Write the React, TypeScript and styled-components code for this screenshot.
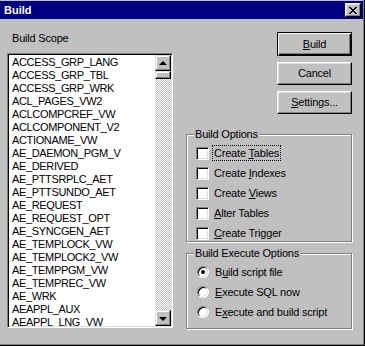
import styled, { createGlobalStyle } from "styled-components"

const GlobalStyles = createGlobalStyle`
  *,
  *::before,
  *::after {
    box-sizing: border-box;
    margin: 0;
    padding: 0;
  }

  body {
    margin: 0;
    font-family: "Liberation Sans", Arial, sans-serif;
    font-size: 11px;
    color: #000;
    background: #c0c0c0;
  }
`

const StyledWindow = styled.div`
  width: 365px;
  height: 346px;
  padding-top: 1px;
  background: #c0c0c0;
  box-shadow: inset -1px -1px #000, inset -2px -2px #808080;
  overflow: hidden;
`

const StyledTitleBar = styled.div`
  height: 18px;
  margin-right: 2px;
  padding: 0 2px 0 4px;
  display: flex;
  align-items: center;
  justify-content: space-between;
  background: #000080;
`

const StyledTitle = styled.span`
  color: #fff;
  font-weight: 700;
  font-size: 11px;
  line-height: 18px;
`

const StyledCloseButton = styled.div`
  width: 16px;
  height: 14px;
  display: flex;
  align-items: center;
  justify-content: center;
  padding-top: 1px;
  background: #c0c0c0;
  border: 1px solid;
  border-color: #fff #000 #000 #fff;
  box-shadow: inset -1px -1px #808080, inset 1px 1px #dfdfdf;
`

const StyledBody = styled.div`
  display: flex;
  gap: 13px;
  padding: 13px 0 0 7px;
`

const StyledLeftColumn = styled.div`
  width: 166px;
  display: flex;
  flex-direction: column;
`

const StyledLabel = styled.div`
  margin: 0 0 8px 5px;
  line-height: 13px;
  letter-spacing: -0.2px;
`

const StyledListBox = styled.div`
  height: 275px;
  display: flex;
  border: 1px solid;
  border-color: #808080 #fff #fff #808080;
  box-shadow: inset 1px 1px #000, inset -1px -1px #dfdfdf;
  padding: 1px;
`

const StyledItems = styled.div`
  flex: 1;
  overflow: hidden;
  padding: 1px 0 0 3px;
  background: #fff;
`

const StyledItem = styled.div`
  height: 13px;
  line-height: 13px;
  white-space: nowrap;
  letter-spacing: -0.35px;
`

const StyledScrollBar = styled.div`
  width: 16px;
  display: flex;
  flex-direction: column;
`

const StyledTrack = styled.div`
  flex: 1;
  background-color: #fff;
  background-image: repeating-conic-gradient(#c0c0c0 0 25%, #fff 0 50%);
  background-size: 2px 2px;
`

const StyledRaised = styled.div<{ $height: number }>`
  height: ${(p) => p.$height}px;
  display: flex;
  align-items: center;
  justify-content: center;
  background: #c0c0c0;
  border: 1px solid;
  border-color: #dfdfdf #000 #000 #dfdfdf;
  box-shadow: inset -1px -1px #808080, inset 1px 1px #fff;
`

const StyledArrow = styled.span<{ $down?: boolean }>`
  width: 0;
  height: 0;
  border-left: 4px solid transparent;
  border-right: 4px solid transparent;
  ${(p) =>
    p.$down
      ? "border-top: 4px solid #000; margin-top: 1px;"
      : "border-bottom: 4px solid #000; margin-top: -1px;"}
`

const StyledRightColumn = styled.div`
  width: 166px;
  display: flex;
  flex-direction: column;
`

const StyledButtonStack = styled.div`
  align-self: flex-end;
  width: 75px;
  display: flex;
  flex-direction: column;
  gap: 6px;
`

const StyledButton = styled.div<{ $isDefault?: boolean }>`
  height: ${(p) => (p.$isDefault ? 24 : 23)}px;
  display: flex;
  align-items: center;
  justify-content: center;
  background: #c0c0c0;
  border: 1px solid;
  border-color: ${(p) => (p.$isDefault ? "#000" : "#fff #000 #000 #fff")};
  box-shadow: ${(p) =>
    p.$isDefault
      ? "inset 1px 1px #fff, inset -1px -1px #000, inset -2px -2px #808080"
      : "inset -1px -1px #808080, inset 1px 1px #dfdfdf"};
  line-height: 13px;
  letter-spacing: -0.2px;
`

const StyledGroup = styled.fieldset<{ $top: number; $bottom: number }>`
  margin-top: ${(p) => p.$top}px;
  padding: 4px 0 ${(p) => p.$bottom}px 0;
  border: 1px solid #808080;
  box-shadow: inset 1px 1px #fff, 1px 1px #fff;
  min-width: 0;
`

const StyledLegend = styled.legend`
  margin-left: 7px;
  padding: 0 1px;
  line-height: 13px;
  letter-spacing: -0.2px;
  background: #c0c0c0;
`

const StyledOptions = styled.div`
  display: flex;
  flex-direction: column;
  gap: 4px;
  padding-left: 9px;
`

const StyledOption = styled.div`
  height: 16px;
  display: flex;
  align-items: center;
  gap: 3px;
`

const StyledCheckbox = styled.span`
  width: 13px;
  height: 13px;
  background: #fff;
  border: 1px solid;
  border-color: #808080 #fff #fff #808080;
  box-shadow: inset 1px 1px #000, inset -1px -1px #dfdfdf;
`

const StyledRadio = styled.span<{ $checked?: boolean }>`
  width: 12px;
  height: 12px;
  margin-left: 1px;
  margin-right: 1px;
  border-radius: 50%;
  background: #fff;
  border: 1px solid;
  border-color: #808080 #fff #fff #808080;
  box-shadow: inset 1px 1px #000, inset -1px -1px #dfdfdf;
  display: flex;
  align-items: center;
  justify-content: center;

  &::after {
    content: "";
    width: 4px;
    height: 4px;
    border-radius: 50%;
    background: ${(p) => (p.$checked ? "#000" : "transparent")};
  }
`

const StyledOptionText = styled.span<{ $focused?: boolean }>`
  height: 16px;
  padding: 0 1px;
  line-height: 14px;
  letter-spacing: -0.2px;
  border: 1px ${(p) => (p.$focused ? "dotted #000" : "solid transparent")};
`

const items = [
  "ACCESS_GRP_LANG",
  "ACCESS_GRP_TBL",
  "ACCESS_GRP_WRK",
  "ACL_PAGES_VW2",
  "ACLCOMPCREF_VW",
  "ACLCOMPONENT_V2",
  "ACTIONAME_VW",
  "AE_DAEMON_PGM_V",
  "AE_DERIVED",
  "AE_PTTSRPLC_AET",
  "AE_PTTSUNDO_AET",
  "AE_REQUEST",
  "AE_REQUEST_OPT",
  "AE_SYNCGEN_AET",
  "AE_TEMPLOCK_VW",
  "AE_TEMPLOCK2_VW",
  "AE_TEMPPGM_VW",
  "AE_TEMPREC_VW",
  "AE_WRK",
  "AEAPPL_AUX",
  "AEAPPL_LNG_VW",
]

const CloseGlyph = () => (
  <svg width="8" height="7" viewBox="0 0 8 7" shapeRendering="crispEdges">
    <path
      d="M0 0h2v1h-2zM6 0h2v1h-2zM1 1h2v1h-2zM5 1h2v1h-2zM2 2h4v1h-4zM3 3h2v1h-2zM2 4h4v1h-4zM1 5h2v1h-2zM5 5h2v1h-2zM0 6h2v1h-2zM6 6h2v1h-2z"
      fill="#000"
    />
  </svg>
)

const App = () => {
  return (
    <>
      <GlobalStyles />
      <StyledWindow>
        <StyledTitleBar>
          <StyledTitle>Build</StyledTitle>
          <StyledCloseButton>
            <CloseGlyph />
          </StyledCloseButton>
        </StyledTitleBar>

        <StyledBody>
          <StyledLeftColumn>
            <StyledLabel>Build Scope</StyledLabel>
            <StyledListBox>
              <StyledItems>
                {items.map((item) => (
                  <StyledItem key={item}>{item}</StyledItem>
                ))}
              </StyledItems>
              <StyledScrollBar>
                <StyledRaised $height={16}>
                  <StyledArrow />
                </StyledRaised>
                <StyledRaised $height={8} />
                <StyledTrack />
                <StyledRaised $height={16}>
                  <StyledArrow $down />
                </StyledRaised>
              </StyledScrollBar>
            </StyledListBox>
          </StyledLeftColumn>

          <StyledRightColumn>
            <StyledButtonStack>
              <StyledButton $isDefault>
                <span>
                  <u>B</u>uild
                </span>
              </StyledButton>
              <StyledButton>Cancel</StyledButton>
              <StyledButton>
                <span>
                  <u>S</u>ettings...
                </span>
              </StyledButton>
            </StyledButtonStack>

            <StyledGroup $top={14} $bottom={0}>
              <StyledLegend>Build Options</StyledLegend>
              <StyledOptions>
                <StyledOption>
                  <StyledCheckbox />
                  <StyledOptionText $focused>
                    Create <u>T</u>ables
                  </StyledOptionText>
                </StyledOption>
                <StyledOption>
                  <StyledCheckbox />
                  <StyledOptionText>
                    Create <u>I</u>ndexes
                  </StyledOptionText>
                </StyledOption>
                <StyledOption>
                  <StyledCheckbox />
                  <StyledOptionText>
                    Create <u>V</u>iews
                  </StyledOptionText>
                </StyledOption>
                <StyledOption>
                  <StyledCheckbox />
                  <StyledOptionText>
                    <u>A</u>lter Tables
                  </StyledOptionText>
                </StyledOption>
                <StyledOption>
                  <StyledCheckbox />
                  <StyledOptionText>
                    <u>C</u>reate Trigger
                  </StyledOptionText>
                </StyledOption>
              </StyledOptions>
            </StyledGroup>

            <StyledGroup $top={5} $bottom={8}>
              <StyledLegend>Build Execute Options</StyledLegend>
              <StyledOptions>
                <StyledOption>
                  <StyledRadio $checked />
                  <StyledOptionText>
                    B<u>u</u>ild script file
                  </StyledOptionText>
                </StyledOption>
                <StyledOption>
                  <StyledRadio />
                  <StyledOptionText>
                    <u>E</u>xecute SQL now
                  </StyledOptionText>
                </StyledOption>
                <StyledOption>
                  <StyledRadio />
                  <StyledOptionText>
                    E<u>x</u>ecute and build script
                  </StyledOptionText>
                </StyledOption>
              </StyledOptions>
            </StyledGroup>
          </StyledRightColumn>
        </StyledBody>
      </StyledWindow>
    </>
  )
}

export default App
